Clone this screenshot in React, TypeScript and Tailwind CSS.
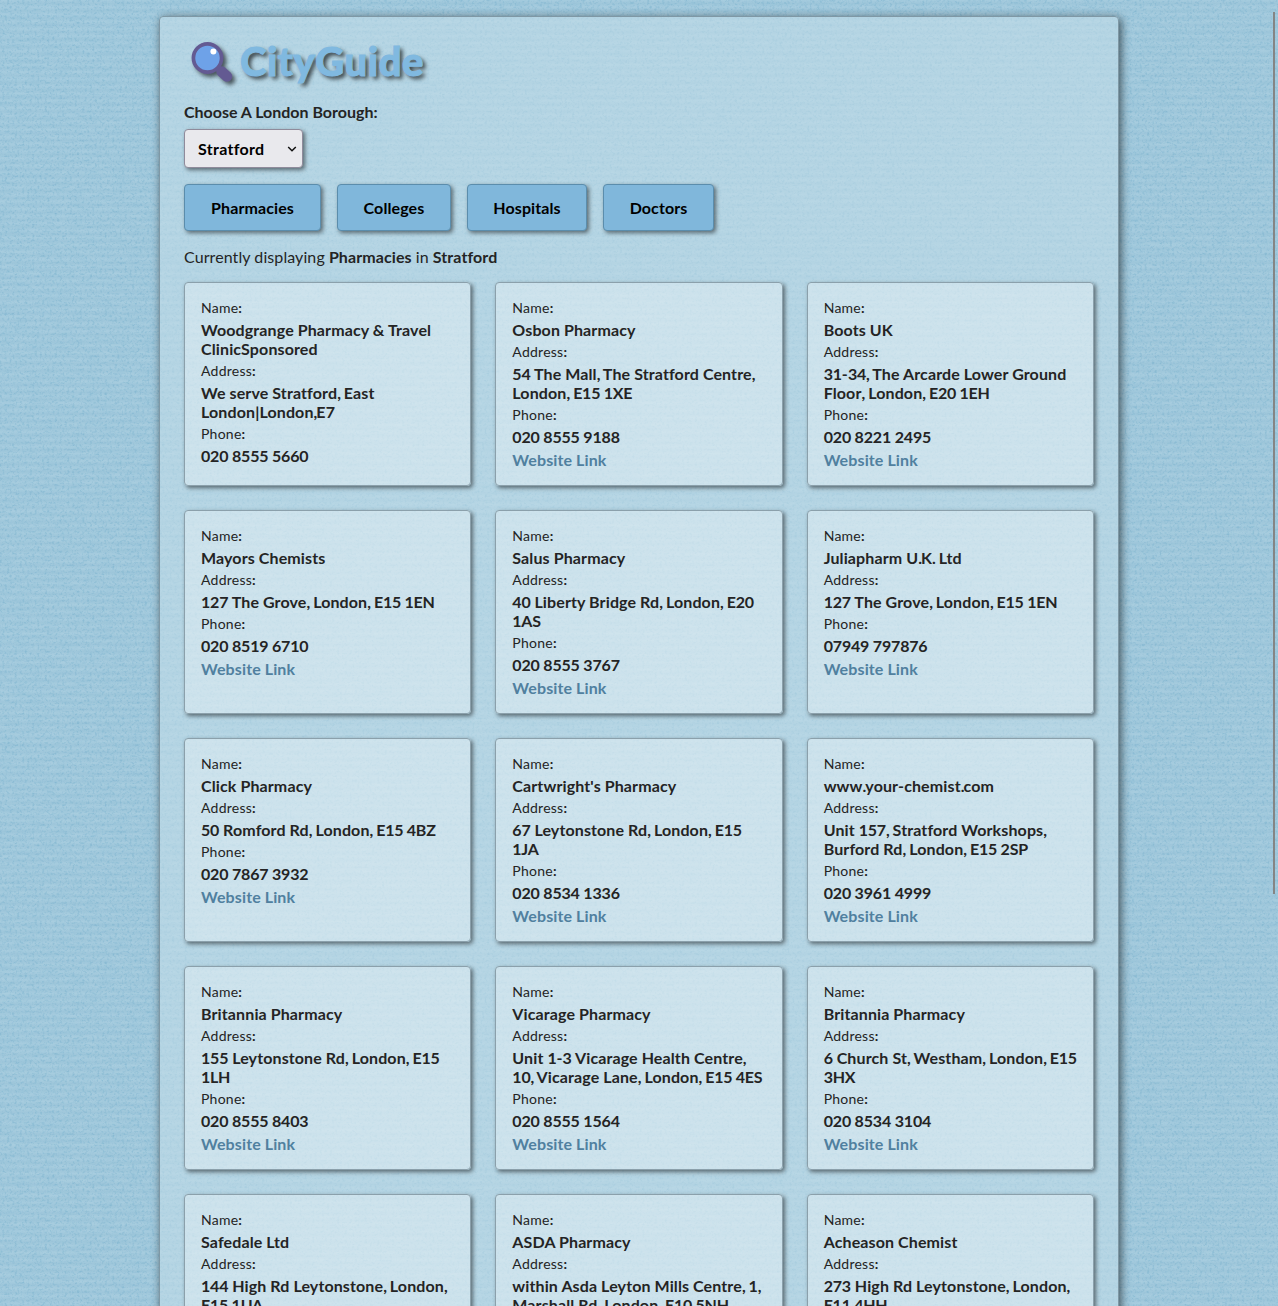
import React from "react";

type Place = { name: string; address: string; postcode?: string; phone: string; link?: boolean };

const places: Place[] = [
  { name: "Woodgrange Pharmacy & Travel ClinicSponsored", address: "We serve Stratford, East London|London,E7", phone: "020 8555 5660", link: false },
  { name: "Osbon Pharmacy", address: "54 The Mall, The Stratford Centre, London,", postcode: "E15 1XE", phone: "020 8555 9188" },
  { name: "Boots UK", address: "31-34, The Arcarde Lower Ground Floor, London,", postcode: "E20 1EH", phone: "020 8221 2495" },
  { name: "Mayors Chemists", address: "127 The Grove, London,", postcode: "E15 1EN", phone: "020 8519 6710" },
  { name: "Salus Pharmacy", address: "40 Liberty Bridge Rd, London,", postcode: "E20 1AS", phone: "020 8555 3767" },
  { name: "Juliapharm U.K. Ltd", address: "127 The Grove, London,", postcode: "E15 1EN", phone: "07949 797876" },
  { name: "Click Pharmacy", address: "50 Romford Rd, London,", postcode: "E15 4BZ", phone: "020 7867 3932" },
  { name: "Cartwright's Pharmacy", address: "67 Leytonstone Rd, London,", postcode: "E15 1JA", phone: "020 8534 1336" },
  { name: "www.your-chemist.com", address: "Unit 157, Stratford Workshops, Burford Rd, London,", postcode: "E15 2SP", phone: "020 3961 4999" },
  { name: "Britannia Pharmacy", address: "155 Leytonstone Rd, London,", postcode: "E15 1LH", phone: "020 8555 8403" },
  { name: "Vicarage Pharmacy", address: "Unit 1-3 Vicarage Health Centre, 10, Vicarage Lane, London,", postcode: "E15 4ES", phone: "020 8555 1564" },
  { name: "Britannia Pharmacy", address: "6 Church St, Westham, London,", postcode: "E15 3HX", phone: "020 8534 3104" },
  { name: "Safedale Ltd", address: "144 High Rd Leytonstone, London,", postcode: "E15 1UA", phone: "020 8534 2760" },
  { name: "ASDA Pharmacy", address: "within Asda Leyton Mills Centre, 1, Marshall Rd, London,", postcode: "E10 5NH", phone: "020 8988 2610" },
  { name: "Acheason Chemist", address: "273 High Rd Leytonstone, London,", postcode: "E11 4HH", phone: "020 8534 1405" },
];

const categories = [
  { label: "Pharmacies", width: "w-[137px]" },
  { label: "Colleges", width: "w-[114px]" },
  { label: "Hospitals", width: "w-[120px]" },
  { label: "Doctors", width: "w-[111px]" },
];

function Texture() {
  return (
    <svg className="absolute inset-0 h-full w-full" aria-hidden="true">
      <filter id="grain" x="0" y="0" width="100%" height="100%" colorInterpolationFilters="sRGB">
        <feTurbulence type="fractalNoise" baseFrequency="0.4 0.45" numOctaves="2" seed="4" />
        <feColorMatrix values="0 0 0 0 0.42  0 0 0 0 0.66  0 0 0 0 0.78  2.2 0 0 0 -1.05" />
      </filter>
      <filter id="weave" x="0" y="0" width="100%" height="100%" colorInterpolationFilters="sRGB">
        <feTurbulence type="fractalNoise" baseFrequency="0.07 0.14" numOctaves="1" seed="9" />
        <feColorMatrix values="0 0 0 0 0.48  0 0 0 0 0.71  0 0 0 0 0.82  1.4 0 0 0 -0.5" />
      </filter>
      <rect width="100%" height="100%" filter="url(#weave)" opacity="0.2" />
      <rect width="100%" height="100%" filter="url(#grain)" opacity="0.5" />
    </svg>
  );
}

function Magnifier() {
  return (
    <svg width="44" height="44" viewBox="0 0 44 44" className="overflow-visible drop-shadow-[3px_3px_2px_rgba(0,0,0,0.6)]" aria-hidden="true">
      <path d="M25 25.5 L31 30.5" stroke="#635a92" strokeWidth="5" />
      <path d="M30.5 30.5 L36 35.5" stroke="#635a92" strokeWidth="10.5" strokeLinecap="round" />
      <circle cx="16.5" cy="17" r="14.1" fill="#6ea2e8" stroke="#635a92" strokeWidth="3.7" />
      <circle cx="22.4" cy="10.4" r="3" fill="#fff" />
    </svg>
  );
}

/* Sets figures and punctuation a little tighter than the letters around them. */
function Fitted({ text }: { text: string }) {
  return (
    <>
      {text.split(/(\d+|[.,])/).map((part, i) => {
        if (/^\d/.test(part)) return <span key={i} className="tracking-[-0.2px]">{part}</span>;
        if (/^[.,]$/.test(part)) return <span key={i} className="tracking-[-1px]">{part}</span>;
        return part;
      })}
    </>
  );
}

function Label({ text }: { text: string }) {
  return (
    <p className="mb-1 text-[14px] leading-[17px] tracking-[0.25px]">
      {text}
      <b>:</b>
    </p>
  );
}

function Card({ place }: { place: Place }) {
  return (
    <article className="rounded-[4px] border border-[#8ba0ab] bg-white/32 p-4 shadow-[2px_2px_4px_rgba(0,0,0,0.5)]">
      <Label text="Name" />
      <p className="mb-1 font-bold leading-[19px]">
        <Fitted text={place.name} />
      </p>
      <Label text="Address" />
      <p className="mb-1 font-bold leading-[19px]">
        <Fitted text={place.address} />{" "}
        {place.postcode && <span className="tracking-[-0.24px]">{place.postcode}</span>}
      </p>
      <Label text="Phone" />
      <p className="mb-1 font-bold leading-[19px] tracking-[-0.17px]">{place.phone}</p>
      {place.link !== false && (
        <a className="block font-bold leading-[19px] text-[#50809f]">Website Link</a>
      )}
    </article>
  );
}

export default function App() {
  return (
    <div className="relative h-screen overflow-hidden bg-[#a8cddf] font-['Lato',sans-serif] text-[16px] tracking-[0.12px] text-[#242424] [word-spacing:-0.1px]">
      <div className="absolute inset-0 bg-[repeating-linear-gradient(180deg,rgba(125,175,202,0)_0px,rgba(125,175,202,0.22)_3.6px,rgba(125,175,202,0)_7.2px)]" />
      <Texture />
      <main className="relative mx-auto mt-4 w-[960px] rounded-[4px] border border-[#7f98a5] bg-[rgba(202,226,236,0.5)] px-6 pt-6 pb-6 shadow-[2px_2px_10px_rgba(0,0,0,0.6)]">
        <h1 className="flex h-[44px] items-center text-[40px] leading-[44px] font-black text-[#80b9e0]">
          <span className="ml-[7px] mr-1 block">
            <Magnifier />
          </span>
          <span className="ml-px pb-1 tracking-[0.55px] [-webkit-text-stroke:1px_#80b9e0] [text-shadow:3px_3px_4px_rgba(0,0,0,0.7)]">CityGuide</span>
        </h1>
        <p className="mt-[17px] font-bold leading-[20px] tracking-[0px]">Choose A London Borough:</p>
        <div className="mt-[7px] flex h-[39px] w-[119px] items-center justify-between rounded-[4px] border border-[#8f8b9b] bg-[#e9e9ed] pr-[5px] pl-[13px] font-bold tracking-[0.3px] text-black shadow-[2px_2px_4px_rgba(0,0,0,0.5)]">
          Stratford
          <svg width="10" height="10" viewBox="0 0 10 10" fill="none" stroke="#111" strokeWidth="1.5" aria-hidden="true">
            <path d="M1.2 3 L5 6.8 L8.8 3" />
          </svg>
        </div>
        <nav className="mt-4 flex gap-4">
          {categories.map((c) => (
            <button
              key={c.label}
              className={`${c.width} h-[47px] rounded-[4px] border border-[#5b8dac] bg-[#80b7db] font-bold tracking-[0.1px] text-black shadow-[2px_2px_4px_rgba(0,0,0,0.5)]`}
            >
              {c.label}
            </button>
          ))}
        </nav>
        <p className="mt-4 leading-[20px] tracking-[0.09px]">
          Currently displaying <b>Pharmacies</b> in <b>Stratford</b>
        </p>
        <section className="mt-[15px] grid grid-cols-3 gap-6">
          {places.map((p, i) => (
            <Card key={i} place={p} />
          ))}
        </section>
      </main>
      <div className="absolute top-3 right-[3px] h-[882px] w-[2px] bg-[#858585]" />
    </div>
  );
}
